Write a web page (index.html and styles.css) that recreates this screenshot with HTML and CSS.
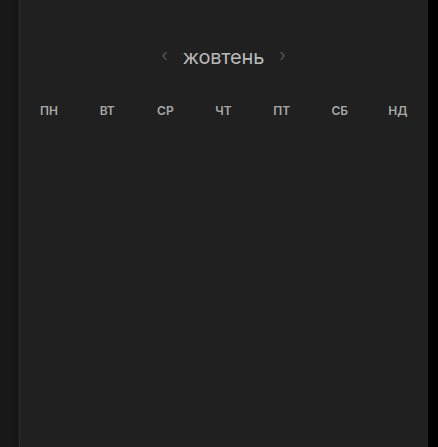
FILE: index.html
```html
<!DOCTYPE html>
<html lang="uk">
<head>
<meta charset="utf-8">
<link rel="stylesheet" href="styles.css">
</head>
<body>
<div class="app">
  <div class="side"></div>
  <div class="shade"></div>
  <div class="edge"></div>
  <main class="panel">
    <div class="month">
      <span class="chev">‹</span>
      <span class="name">жовтень</span>
      <span class="chev">›</span>
    </div>
    <div class="week">
      <span>ПН</span><span>ВТ</span><span>СР</span><span>ЧТ</span><span>ПТ</span><span>СБ</span><span>НД</span>
    </div>
  </main>
  <div class="redge"></div>
  <div class="outer"></div>
</div>
</body>
</html>
```

FILE: styles.css
```css
html, body {
  margin: 0;
  height: 100%;
  background: #000;
}
.app {
  display: flex;
  height: 447px;
  font-family: Inter, "Noto Sans", sans-serif;
}
.side {
  width: 14px;
  background: #181818;
}
.shade {
  width: 5px;
  background: linear-gradient(to right, #181818, #151515 60%, #1a1a1a);
}
.edge {
  width: 1px;
  background: #2d2d2d;
}
.panel {
  width: 407px;
  background: #202020;
  display: flex;
  flex-direction: column;
}
.redge {
  width: 1px;
  background: #232323;
}
.outer {
  flex: 1;
  background: #000;
}
.month {
  display: flex;
  justify-content: center;
  align-items: center;
  gap: 15px;
  margin-top: 43px;
  height: 28px;
}
.name {
  font-size: 20px;
  color: #b9b9b9;
  letter-spacing: -0.2px;
}
.chev {
  font-size: 17px;
  color: #555;
  position: relative;
  top: -2px;
}
.week {
  display: grid;
  grid-template-columns: repeat(7, 1fr);
  margin-top: 32px;
  font-size: 12px;
  font-weight: 600;
  color: #a8a8a8;
  text-align: center;
}
```
